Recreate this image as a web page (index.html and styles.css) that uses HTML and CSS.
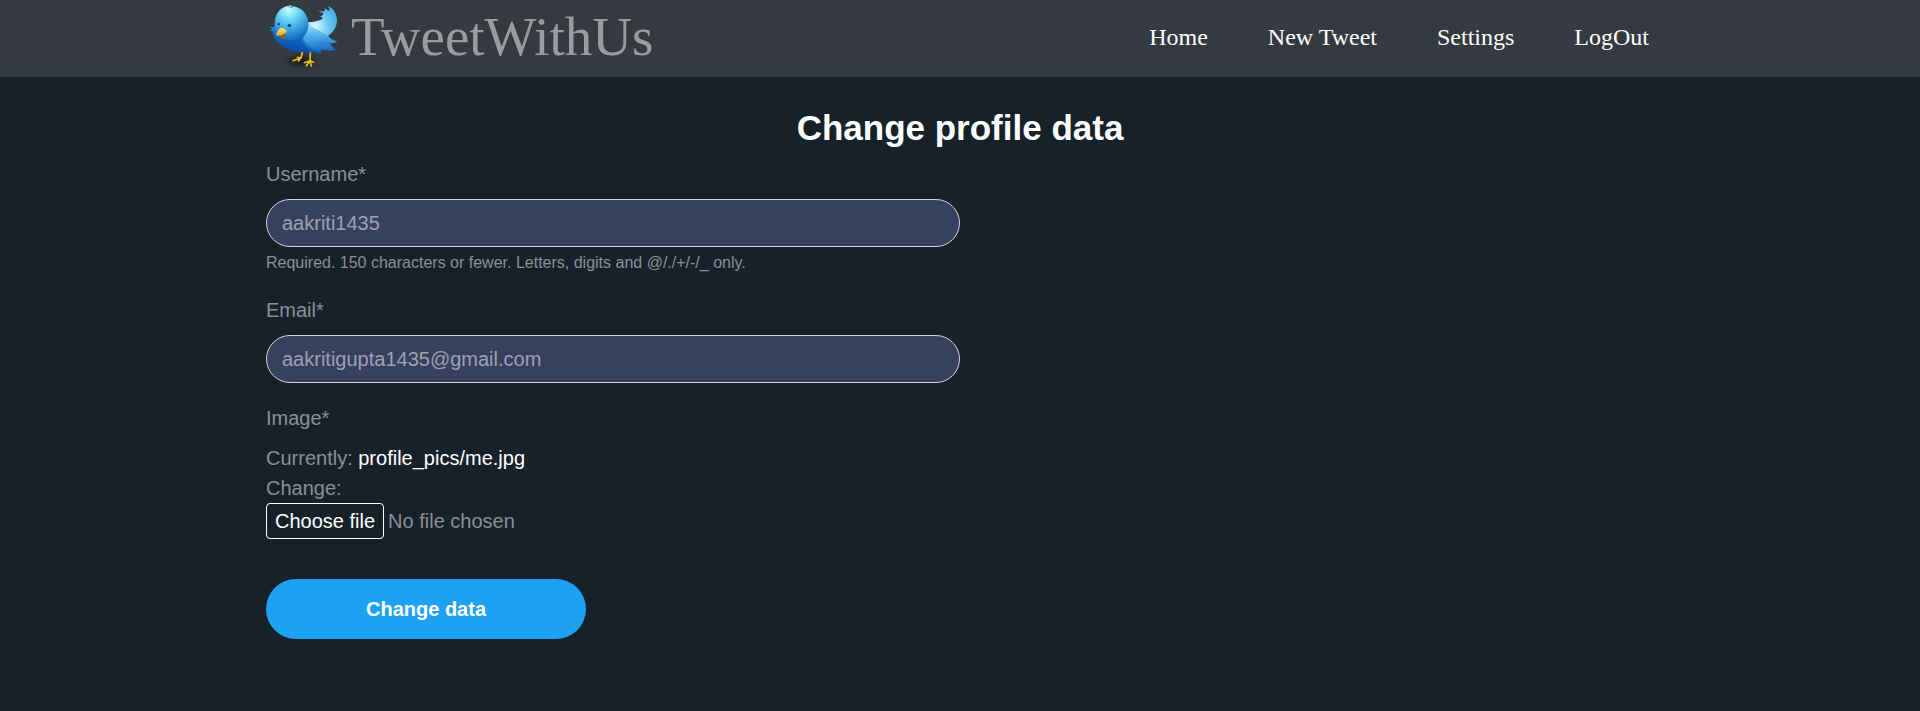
FILE: index.html
```html
<!DOCTYPE html>
<html lang="en">
<head>
<meta charset="utf-8">
<title>TweetWithUs</title>
<link rel="stylesheet" href="styles.css">
</head>
<body>
<header class="topbar">
  <div class="container topbar-inner">
    <a class="brand" href="#">
      <svg class="brand-bird" viewBox="30 0 225 231" aria-hidden="true">
        <defs>
          <radialGradient id="head" cx="0.42" cy="0.12" r="0.92">
            <stop offset="0" stop-color="#d2faff"/>
            <stop offset="0.25" stop-color="#7de2fa"/>
            <stop offset="0.6" stop-color="#3ba6e2"/>
            <stop offset="0.95" stop-color="#1268c2"/>
          </radialGradient>
          <linearGradient id="body" x1="0.7" y1="0" x2="0.4" y2="1">
            <stop offset="0" stop-color="#5cc0f2"/>
            <stop offset="0.5" stop-color="#1268c2"/>
            <stop offset="1" stop-color="#0444a4"/>
          </linearGradient>
          <linearGradient id="wing" x1="0.3" y1="0" x2="0.4" y2="1">
            <stop offset="0" stop-color="#a4e2fb"/>
            <stop offset="0.4" stop-color="#4fb4ee"/>
            <stop offset="1" stop-color="#0f5ebc"/>
          </linearGradient>
          <radialGradient id="tail" cx="0.3" cy="0.55" r="0.8">
            <stop offset="0" stop-color="#e4f8ff"/>
            <stop offset="0.45" stop-color="#78cff5"/>
            <stop offset="1" stop-color="#3aa4e2"/>
          </radialGradient>
          <linearGradient id="beak" x1="0" y1="0" x2="0" y2="1">
            <stop offset="0" stop-color="#ffe56a"/>
            <stop offset="1" stop-color="#e3a51a"/>
          </linearGradient>
          <radialGradient id="shade">
            <stop offset="0" stop-color="#0d0f12" stop-opacity="0.8"/>
            <stop offset="0.5" stop-color="#15181b" stop-opacity="0.45"/>
            <stop offset="1" stop-color="#343a40" stop-opacity="0"/>
          </radialGradient>
        </defs>
        <ellipse cx="138" cy="183" rx="66" ry="27" fill="url(#shade)"/>
        <g fill="none" stroke="#e9bd20" stroke-width="5" stroke-linecap="round" stroke-linejoin="round">
          <path d="M139 156 L135 174 L111 182 M135 174 L124 172 M133 175 L128 183"/>
          <path d="M163 156 L162 182 L145 188 M162 183 L151 197 M162 183 L166 198 M162 182 L173 187"/>
        </g>
        <path d="M148 66 C162 67 178 66 190 61 C204 56 202 50 190 50 C199 47 204 42 202 38 C196 38 190 35 187 30 C199 38 211 36 206 24 C214 32 222 34 221 28 L216 19 C228 21 243 39 243 61 C243 83 230 99 214 109 L173 130 Z" fill="url(#tail)"/>
        <path d="M62 76 C56 82 48 82 41 80 L49 87 L39 91 L50 94 C49 108 61 128 78 137 C90 146 101 151 116 154 C138 158 160 158 178 156 L194 162 L194 148 L176 92 L146 66 Z" fill="url(#body)"/>
        <path d="M150 68 C172 84 198 94 218 109 C224 118 233 122 243 124 C238 131 228 131 221 130 C226 138 232 143 239 150 C223 155 207 150 194 148 L196 162 C174 156 143 141 136 114 Z" fill="url(#wing)"/>
        <path d="M137 111 C149 138 171 152 195 161" fill="none" stroke="#07479b" stroke-width="3" opacity="0.8"/>
        <path d="M188 127 C201 130 211 130 221 130 M182 140 C192 145 198 147 208 149" fill="none" stroke="#1a70c8" stroke-width="2"/>
        <path d="M56 75 C55 46 70 22 96 18 L103 15 L108 19 C136 21 154 40 157 66 C160 98 140 121 113 122 C81 124 57 102 56 75 Z" fill="url(#head)"/>
        <path d="M96 121 C115 126 138 119 148 103" fill="none" stroke="#075099" stroke-width="2" opacity="0.6"/>
        <path d="M97 19 L110 24 M103 15 L111 22" stroke="#167da2" stroke-width="2"/>
        <circle cx="68" cy="72" r="4" fill="#173550"/>
        <circle cx="100" cy="76" r="5" fill="#173550"/>
        <circle cx="67" cy="71" r="1" fill="#d7edf8"/>
        <circle cx="99" cy="74" r="1" fill="#d7edf8"/>
        <path d="M71 105 L76 117 C84 119 91 112 90 104 Z" fill="#a75d0b"/>
        <path d="M75 84 C84 84 93 90 92 97 C85 100 76 108 66 108 C59 105 59 101 62 98 C66 93 68 86 75 84 Z" fill="url(#beak)"/>
      </svg>
      <span class="brand-name">TweetWithUs</span>
    </a>
    <nav class="menu">
      <a href="#">Home</a>
      <a href="#">New Tweet</a>
      <a href="#">Settings</a>
      <a href="#">LogOut</a>
    </nav>
  </div>
</header>
<main class="container page">
  <h1 class="title">Change profile data</h1>
  <form class="profile-form">
    <div class="field">
      <label class="field-label" for="username">Username*</label>
      <input class="text-input" id="username" type="text" value="aakriti1435" aria-describedby="username-help">
      <small class="help" id="username-help">Required. 150 characters or fewer. Letters, digits and @/./+/-/_ only.</small>
    </div>
    <div class="field">
      <label class="field-label" for="email">Email*</label>
      <input class="text-input" id="email" type="email" value="aakritigupta1435@gmail.com">
    </div>
    <div class="field">
      <label class="field-label" for="image">Image*</label>
      <div>Currently: <a class="file-link" href="#">profile_pics/me.jpg</a></div>
      <div>Change:</div>
      <div class="file-picker">
        <div class="file-face"><span class="file-button">Choose file</span><span>No file chosen</span></div>
        <input class="file-input" id="image" type="file">
      </div>
    </div>
    <button class="submit" type="submit">Change data</button>
  </form>
</main>
</body>
</html>
```
FILE: styles.css
```css
* {
  box-sizing: border-box;
}

body {
  margin: 0;
  background: #17212a;
  color: #8b8f94;
  font: 20px/30px "Liberation Sans", Arial, sans-serif;
}

a {
  color: #fff;
  text-decoration: none;
}

.container {
  max-width: 1420px;
  margin: 0 auto;
  padding: 0 16px;
}

.topbar {
  background: #353a41;
  font-family: Georgia, "Liberation Serif", serif;
}

.topbar-inner {
  display: flex;
  align-items: center;
  justify-content: space-between;
}

.brand {
  display: flex;
  align-items: center;
  gap: 10px;
  color: #999c9f;
  font-size: 55px;
  line-height: 70px;
}

.brand-name {
  padding-bottom: 4px;
}

.brand-bird {
  display: block;
  width: 75px;
  height: 77px;
}

.menu {
  display: flex;
  gap: 60px;
  padding: 0 5px 4px 0;
  font-size: 24px;
}

.page {
  padding-top: 30px;
  padding-bottom: 40px;
}

.title {
  margin: 0 0 10px;
  color: #fff;
  font-size: 35px;
  line-height: 42px;
  text-align: center;
}

.profile-form {
  width: 50%;
}

.field {
  margin-bottom: 20px;
}

.field-label {
  display: block;
  margin-bottom: 10px;
}

.text-input {
  display: block;
  width: 100%;
  height: 48px;
  padding: 0 15px;
  border: 1px solid #ced4da;
  border-radius: 24px;
  background: #38405f;
  color: #9ea2b0;
  font: inherit;
}

.help {
  display: block;
  margin-top: 4px;
  font-size: 16px;
  line-height: 24px;
}

.file-picker {
  display: inline-grid;
  vertical-align: top;
}

.file-face,
.file-input {
  grid-area: 1 / 1;
}

.file-face {
  display: flex;
  align-items: center;
  gap: 4px;
}

.file-button {
  padding: 2px 8px;
  border: 1px solid #fff;
  border-radius: 4px;
  color: #fff;
}

.file-input {
  width: 100%;
  height: 100%;
  min-width: 0;
  opacity: 0;
}

.submit {
  display: block;
  width: 320px;
  height: 60px;
  margin-top: 40px;
  border: 0;
  border-radius: 30px;
  background: #1da1f2;
  color: #fff;
  font: inherit;
  font-weight: bold;
}
```
